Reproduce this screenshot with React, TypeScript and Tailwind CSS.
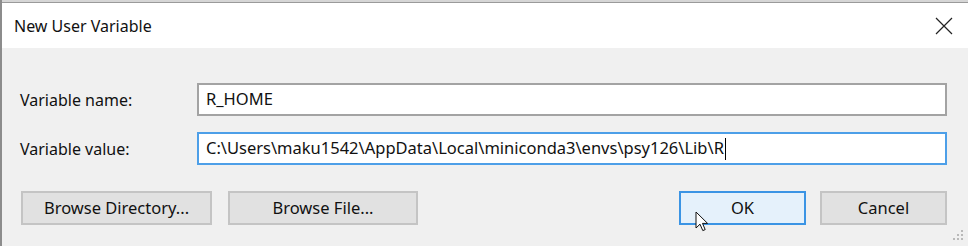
import type { ReactNode } from "react";

const FONT = "font-['Noto_Sans','Open_Sans',sans-serif]";

function Field({
  label,
  value,
  focused,
}: {
  label: string;
  value: string;
  focused?: boolean;
}) {
  return (
    <div className="flex items-center">
      <div className="w-[195px] pl-[18px] text-[16px] text-[#111]">{label}</div>
      <div
        className={
          focused
            ? "flex h-[33px] w-[750px] items-center border-2 border-[#4d9fe8] bg-white pl-[7px] text-[16.5px] text-[#111]"
            : "flex h-[33px] w-[750px] items-center border-2 border-[#a3a3a3] bg-white pl-[7px] text-[16.5px] text-[#111]"
        }
      >
        <span>{value}</span>
        {focused && <span className="ml-[1px] h-[22px] w-[1px] bg-black" />}
      </div>
    </div>
  );
}

function Button({
  children,
  width,
  primary,
}: {
  children: ReactNode;
  width: string;
  primary?: boolean;
}) {
  return (
    <button
      className={
        primary
          ? `flex h-[34px] ${width} items-center justify-center border-2 border-[#3b94e4] bg-[#e5f1fb] text-[16.5px] text-[#111]`
          : `flex h-[34px] ${width} items-center justify-center border-2 border-[#c4c4c4] bg-[#e1e1e1] text-[16.5px] text-[#111]`
      }
    >
      {children}
    </button>
  );
}

export default function App() {
  return (
    <div
      className={`relative flex h-[246px] w-[968px] flex-col overflow-hidden border-l-2 border-[#8c8c8c] bg-[#f0f0f0] ${FONT}`}
    >
      <div className="h-[3px] border-b border-[#9a9a9a] bg-[#d6d6d6]" />
      <div className="flex h-[45px] items-center justify-between bg-white pl-[12px] pr-[14px]">
        <span className="text-[16px] text-[#111]">New User Variable</span>
        <svg width="18" height="18" viewBox="0 0 18 18" className="mr-[1px]">
          <path d="M1 1L17 17M17 1L1 17" stroke="#222" strokeWidth="1.2" />
        </svg>
      </div>

      <div className="flex flex-col gap-[16px] pt-[35px]">
        <Field label="Variable name:" value="R_HOME" />
        <Field
          label="Variable value:"
          value="C:\Users\maku1542\AppData\Local\miniconda3\envs\psy126\Lib\R"
          focused
        />
      </div>

      <div className="flex items-center pl-[19px] pr-[21px] pt-[26px]">
        <div className="flex gap-[16px]">
          <Button width="w-[191px]">Browse Directory...</Button>
          <Button width="w-[190px]">Browse File...</Button>
        </div>
        <div className="ml-auto flex gap-[14px]">
          <Button width="w-[127px]" primary>
            OK
          </Button>
          <Button width="w-[127px]">Cancel</Button>
        </div>
      </div>

      <svg
        width="14"
        height="14"
        viewBox="0 0 14 14"
        className="absolute bottom-[2px] right-[3px]"
      >
        <rect x="10" y="0" width="2" height="2" fill="#b9b9b9" />
        <rect x="6" y="4" width="2" height="2" fill="#b9b9b9" />
        <rect x="10" y="4" width="2" height="2" fill="#b9b9b9" />
        <rect x="2" y="8" width="2" height="2" fill="#b9b9b9" />
        <rect x="6" y="8" width="2" height="2" fill="#b9b9b9" />
        <rect x="10" y="8" width="2" height="2" fill="#b9b9b9" />
      </svg>

      <svg
        width="14"
        height="22"
        viewBox="0 0 14 22"
        className="absolute left-[693px] top-[211px]"
      >
        <path
          d="M1 1V17L5 13.2L7.8 19.6L10.2 18.6L7.5 12.4H12.6Z"
          fill="white"
          stroke="#111"
          strokeWidth="1"
          strokeLinejoin="round"
        />
      </svg>
    </div>
  );
}
